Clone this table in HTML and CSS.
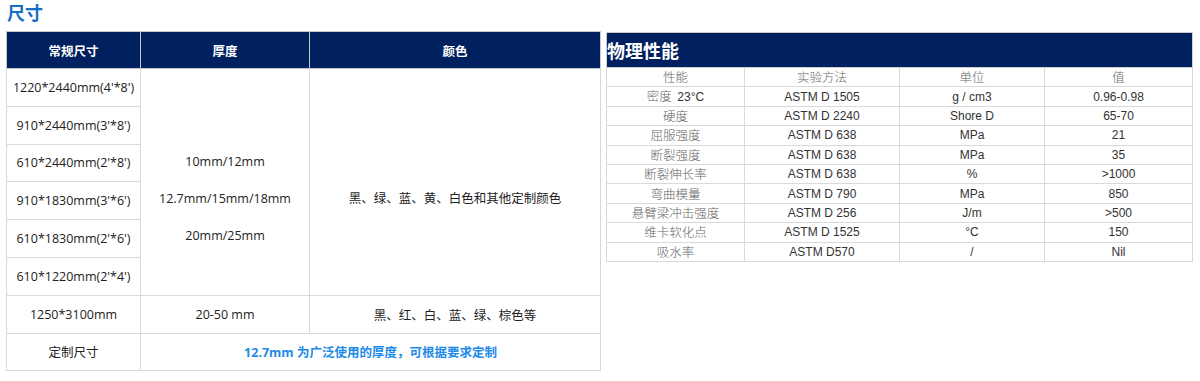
FILE: index.html
```html
<!DOCTYPE html>
<html lang="zh">
<head>
<meta charset="utf-8">
<link rel="stylesheet" href="styles.css">
</head>
<body>
<div class="page">
  <section class="sizes">
    <h2 class="title">尺寸</h2>
    <table class="size-table">
      <colgroup><col class="c1"><col class="c2"><col class="c3"></colgroup>
      <thead>
        <tr><th>常规尺寸</th><th>厚度</th><th>颜色</th></tr>
      </thead>
      <tbody>
        <tr><td>1220*2440mm(4'*8')</td>
          <td rowspan="6" class="multi"><p>10mm/12mm</p><p>12.7mm/15mm/18mm</p><p>20mm/25mm</p></td>
          <td rowspan="6" class="multi"><p>黑、绿、蓝、黄、白色和其他定制颜色</p></td></tr>
        <tr><td>910*2440mm(3'*8')</td></tr>
        <tr><td>610*2440mm(2'*8')</td></tr>
        <tr><td>910*1830mm(3'*6')</td></tr>
        <tr><td>610*1830mm(2'*6')</td></tr>
        <tr><td>610*1220mm(2'*4')</td></tr>
        <tr><td>1250*3100mm</td><td>20-50 mm</td><td>黑、红、白、蓝、绿、棕色等</td></tr>
        <tr><td>定制尺寸</td><td colspan="2" class="note">12.7mm 为广泛使用的厚度，可根据要求定制</td></tr>
      </tbody>
    </table>
  </section>
  <section class="props">
    <table class="prop-table">
      <colgroup><col class="p1"><col class="p2"><col class="p3"><col class="p4"></colgroup>
      <thead>
        <tr><th colspan="4" class="prop-title">物理性能</th></tr>
      </thead>
      <tbody>
        <tr><td class="zh">性能</td><td class="zh">实验方法</td><td class="zh">单位</td><td class="zh">值</td></tr>
        <tr><td class="zh">密度&nbsp; <span class="lat">23°C</span></td><td>ASTM D 1505</td><td>g / cm3</td><td>0.96-0.98</td></tr>
        <tr><td class="zh">硬度</td><td>ASTM D 2240</td><td>Shore D</td><td>65-70</td></tr>
        <tr><td class="zh">屈服强度</td><td>ASTM D 638</td><td>MPa</td><td>21</td></tr>
        <tr><td class="zh">断裂强度</td><td>ASTM D 638</td><td>MPa</td><td>35</td></tr>
        <tr><td class="zh">断裂伸长率</td><td>ASTM D 638</td><td>%</td><td>&gt;1000</td></tr>
        <tr><td class="zh">弯曲模量</td><td>ASTM D 790</td><td>MPa</td><td>850</td></tr>
        <tr><td class="zh">悬臂梁冲击强度</td><td>ASTM D 256</td><td>J/m</td><td>&gt;500</td></tr>
        <tr><td class="zh">维卡软化点</td><td>ASTM D 1525</td><td>°C</td><td>150</td></tr>
        <tr><td class="zh">吸水率</td><td>ASTM D570</td><td>/</td><td>Nil</td></tr>
      </tbody>
    </table>
  </section>
</div>
</body>
</html>
```

FILE: styles.css
```css
* { box-sizing: border-box; }
html, body { margin: 0; padding: 0; background: #fff; }
body { font-family: "Open Sans", "Noto Sans CJK SC", sans-serif; }

.page {
  display: flex;
  align-items: flex-start;
  padding-left: 6px;
  gap: 6px;
}

.sizes { width: 594px; }

.title {
  margin: 0;
  height: 31px;
  padding-left: 1px;
  font-size: 18px;
  line-height: 24px;
  font-weight: 700;
  color: #1470c6;
  font-family: "Noto Sans CJK SC", sans-serif;
}

.size-table {
  width: 594px;
  border-collapse: collapse;
  table-layout: fixed;
  border: 1px solid #d6d6d6;
  font-size: 12.5px;
  color: #222;
}
.size-table .c1 { width: 134px; }
.size-table .c2 { width: 169px; }
.size-table .c3 { width: 291px; }

.size-table th {
  background: #002060;
  color: #fff;
  font-weight: 700;
  height: 37px;
  border: 1px solid #c9c9c9;
  font-size: 12.5px;
  padding: 0;
}
.size-table td {
  border: 1px solid #d9d9d9;
  height: 37.8px;
  text-align: center;
  vertical-align: middle;
  padding: 0;
  white-space: nowrap;
}
.size-table td.multi {
  padding-top: 34px;
}
.size-table td.multi p {
  margin: 0;
  line-height: 37px;
}
.size-table td.note {
  color: #1e8ae8;
  font-weight: 700;
}

.props {
  margin-top: 32px;
  width: 586px;
}

.prop-table {
  width: 586px;
  border-collapse: collapse;
  table-layout: fixed;
  border: 1px solid #cfcfcf;
  font-family: "Liberation Sans", "Noto Sans CJK SC", sans-serif;
  font-size: 12px;
  color: #333;
}
.prop-table .p1 { width: 138px; }
.prop-table .p2 { width: 155px; }
.prop-table .p3 { width: 145px; }
.prop-table .p4 { width: 148px; }

.prop-title {
  background: #002060;
  color: #fff;
  text-align: left;
  font-family: "Noto Sans CJK SC", sans-serif;
  font-size: 18px;
  font-weight: 700;
  height: 35px;
  padding: 0;
  border: 1px solid #cfcfcf;
}
.prop-table td {
  border: 1px solid #d9d9d9;
  height: 19.4px;
  padding: 0;
  text-align: center;
  vertical-align: middle;
  line-height: 16px;
  white-space: nowrap;
}
.prop-table td.zh {
  color: #666;
  font-weight: 300;
  font-size: 12.5px;
  font-family: "Noto Sans CJK SC", sans-serif;
}
.prop-table .lat {
  font-family: "Liberation Sans", sans-serif;
  font-size: 12px;
  color: #333;
  font-weight: 400;
}
```
